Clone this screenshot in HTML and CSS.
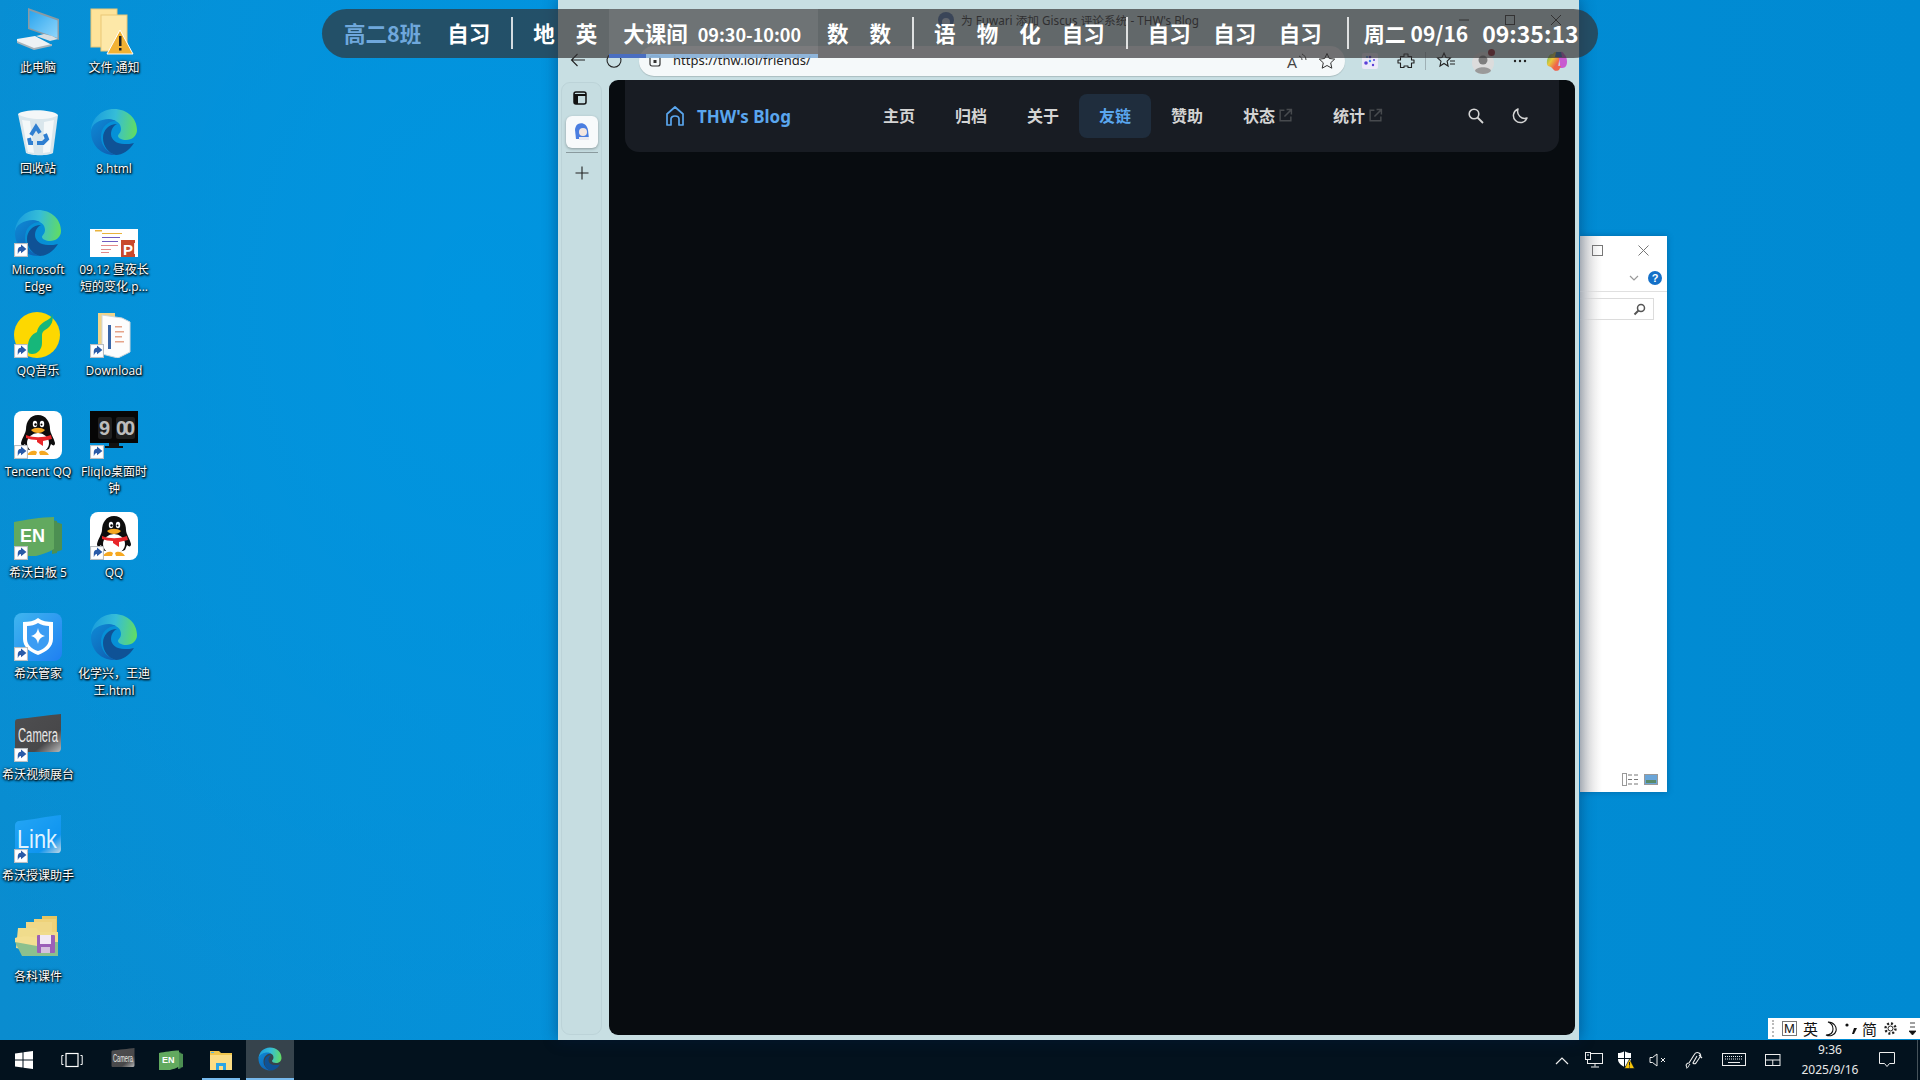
FILE: index.html
```html
<!DOCTYPE html>
<html lang="zh-CN">
<head>
<meta charset="utf-8">
<title>Desktop</title>
<link rel="stylesheet" href="styles.css">
</head>
<body>
<svg class="defs" width="0" height="0" aria-hidden="true">
  <defs>
    <linearGradient id="edgeTop" x1="0" y1="0.5" x2="1" y2="0.6"><stop offset="0" stop-color="#1a9ddd"/><stop offset=".5" stop-color="#35bdd8"/><stop offset="1" stop-color="#62dc62"/></linearGradient>
    <linearGradient id="edgeBody" x1="0" y1="0" x2="0.7" y2="1"><stop offset="0" stop-color="#0e8ad6"/><stop offset="1" stop-color="#0f62b4"/></linearGradient>
    <linearGradient id="monGrad" x1="0" y1="0" x2="1" y2="1"><stop offset="0" stop-color="#2aa4ee"/><stop offset="1" stop-color="#8fd6fb"/></linearGradient>
    <linearGradient id="guardGrad" x1="0" y1="0" x2="1" y2="1"><stop offset="0" stop-color="#3fb6ef"/><stop offset="1" stop-color="#1f7ff2"/></linearGradient>
    <linearGradient id="camGrad" x1="0" y1="0" x2="1" y2="1"><stop offset="0" stop-color="#4e4e50"/><stop offset=".7" stop-color="#48484a"/><stop offset="1" stop-color="#b9b9b9"/></linearGradient>
    <linearGradient id="linkGrad" x1="0" y1="0" x2="1" y2="1"><stop offset="0" stop-color="#25a6f5"/><stop offset=".75" stop-color="#0f95f0"/><stop offset="1" stop-color="#c8d8e2"/></linearGradient>
    <linearGradient id="copGrad" x1="0" y1="0" x2="1" y2="1"><stop offset="0" stop-color="#38b36f"/><stop offset=".4" stop-color="#e8c93a"/><stop offset=".7" stop-color="#f0654a"/><stop offset="1" stop-color="#b455d8"/></linearGradient>

    <symbol id="i-edge" viewBox="0 0 48 48">
      <path d="M1 24C1 11 11 1 24 1c13 0 23 9 23 21 0 6-5 10-11 10-4 0-8-2-8-4 0-2 3-3 3-7 0-6-5-9-11-9C10 12 1 18 1 24z" fill="url(#edgeTop)"/>
      <path d="M1 24c0-8 9-13 18-13 3 0 5 1 7 2-8 0-15 6-15 16 0 9 7 16 15 18h-2C11 47 1 37 1 24z" fill="url(#edgeBody)"/>
      <path d="M44 35C39 43 32 47 26 47c-8-2-13-9-13-17 0-8 6-14 14-14-4 2-6 6-6 10 0 6 6 10 13 10 4 0 7 0 10-1z" fill="#0f5296"/>
    </symbol>
    <symbol id="i-pc" viewBox="0 0 48 48">
      <path d="M14 1l31 11v21L14 22z" fill="#8b9aa3"/><path d="M15.500 3.500l28 10v17.500l-28-10z" fill="url(#monGrad)"/>
      <path d="M22 29l14 5 8-2-6-3-8-2z" fill="#d8dfe3"/><path d="M3 32l18-3 17 9-18 4-17-7z" fill="#eef2f4"/><path d="M3 34l17 7 18-4v2l-18 4-17-7z" fill="#a9b4ba"/>
    </symbol>
    <symbol id="i-warnfolder" viewBox="0 0 48 48">
      <rect x="1" y="2" width="26" height="38" fill="#fde39a" stroke="#eac777"/><rect x="11" y="8" width="26" height="36" fill="#fde8a8" stroke="#eac777"/>
      <path d="M30 23l13 24H17z" fill="#f2b233" stroke="#fff" stroke-width="1"/><rect x="29" y="29" width="2.500" height="10" fill="#222"/><rect x="29" y="41" width="2.500" height="2.500" fill="#222"/>
    </symbol>
    <symbol id="i-bin" viewBox="0 0 48 48">
      <path d="M4 6l40 1-5 38c-4 3-22 3-27 0z" fill="#d9e6ec"/><path d="M4 6c6-5 34-5 40 1-8 6-32 5-40-1z" fill="#f4f7f8"/><path d="M8 12l6 32 6 1-4-32zM30 14l-1 31 7-1 4-32z" fill="#fff" opacity=".7"/>
      <g fill="none" stroke="#2f7fd1" stroke-width="4"><path d="M17 27l5-8 4 6"/><path d="M31 26l2 5-4 4h-6"/><path d="M19 35h-3l-1-5"/></g>
    </symbol>
    <symbol id="i-ppt" viewBox="0 0 48 48">
      <rect x="0" y="20" width="48" height="28" fill="#fff"/>
      <g fill="#e9b33c"><rect x="5" y="21" width="7" height="1.500"/><rect x="12" y="24" width="20" height="1"/></g>
      <g fill="#6f5cc0"><rect x="12" y="28" width="18" height="1"/><rect x="12" y="32" width="16" height="1"/></g>
      <g fill="#e28a8a"><rect x="11" y="36" width="17" height="1"/><rect x="11" y="40" width="10" height="1"/><rect x="11" y="43" width="8" height="1"/></g>
      <rect x="31" y="31" width="14" height="17" fill="#c8492c"/><text x="33" y="46" class="svg-t" font-size="15" fill="#fff">P</text><rect x="44" y="34" width="4" height="11" fill="#fff" opacity=".85"/>
    </symbol>
    <symbol id="i-qqmusic" viewBox="0 0 48 48">
      <circle cx="23" cy="25" r="23" fill="#fdd800"/>
      <path d="M23 22c1-7 7-10 12-13 2-1 3-3 3-6 2 7 0 13-7 17-2 1-3 3-3 5v8c0 6-4 11-10 11-5 0-4-3-4-8 0-7 4-12 9-14z" fill="#16b77a"/>
    </symbol>
    <symbol id="i-download" viewBox="0 0 48 48">
      <path d="M8 3h17v42l-17-2z" fill="#f0d48a"/><path d="M12 5l20 3 8 4v30l-12 6-16-4z" fill="#fdfdfd" stroke="#cfd6da"/>
      <g fill="#3966a8"><rect x="18" y="15" width="3" height="24"/></g><g fill="#e6a48a"><rect x="25" y="16" width="7" height="1.500"/><rect x="25" y="21" width="9" height="1.500"/><rect x="25" y="26" width="7" height="1.500"/><rect x="25" y="31" width="9" height="1.500"/></g>
    </symbol>
    <symbol id="i-qq" viewBox="0 0 48 48">
      <rect x="0" y="0" width="48" height="48" rx="8" fill="#fff"/>
      <path d="M24 4c8 0 12 7 12 14 0 4 4 9 5 14 0 3-2 3-4 1l-2 5c-3 2-19 2-22 0l-2-5c-2 2-4 2-4-1 1-5 5-10 5-14C12 11 16 4 24 4z" fill="#0d0d0d"/>
      <ellipse cx="24" cy="32" rx="11" ry="10" fill="#fff"/>
      <ellipse cx="21" cy="13" rx="2.200" ry="3.200" fill="#fff"/><ellipse cx="28" cy="13" rx="2.200" ry="3.200" fill="#fff"/><circle cx="21.500" cy="13.500" r="1.200" fill="#000"/><circle cx="27.500" cy="13.500" r="1" fill="#000"/>
      <path d="M17 19c4-3 10-3 14 0-3 4-11 4-14 0z" fill="#f6a821"/>
      <path d="M12 24c8 3 16 3 25 0l1 4-9 2v5l-6-4v-2c-4 0-8-1-11-2z" fill="#e8262a"/>
      <path d="M13 44c3-5 8-5 10-3l-1 3zM35 44c-3-5-8-5-10-3l1 3z" fill="#f6a821"/>
    </symbol>
    <symbol id="i-fliqlo" viewBox="0 0 48 48">
      <rect x="0" y="0" width="48" height="32" fill="#060606"/>
      <rect x="8" y="6" width="14" height="22" rx="2" fill="#1f1f1f"/><rect x="26" y="6" width="19" height="22" rx="2" fill="#1f1f1f"/>
      <text x="9" y="24" class="svg-t" font-size="20" fill="#bcbcbc">9</text><text x="26" y="24" class="svg-t" font-size="20" fill="#bcbcbc" textLength="19">00</text>
      <rect x="19" y="32" width="10" height="3" fill="#111"/><rect x="15" y="35" width="18" height="2" fill="#111"/>
    </symbol>
    <symbol id="i-en" viewBox="0 0 48 48">
      <path d="M42 10l6 2v26l-6 2zM38 8l5 1v32l-5 1z" fill="#4c8f52"/>
      <path d="M0 10c10-2 28-5 40-5v32c-6 4-12 5-18 7H0z" fill="#62a95f"/>
      <text x="6" y="30" class="svg-t" font-size="18" fill="#fff">EN</text>
    </symbol>
    <symbol id="i-guard" viewBox="0 0 48 48">
      <rect width="48" height="48" rx="8" fill="url(#guardGrad)"/>
      <path d="M24 5c4 3 9 4 15 4v17c0 8-7 13-15 16-8-3-15-8-15-16V9c6 0 11-1 15-4z" fill="#fff"/>
      <path d="M24 10c3 2 7 3 11 3v13c0 6-5 10-11 12-6-2-11-6-11-12V13c4 0 8-1 11-3z" fill="#3b9cf3"/>
      <path d="M24 15c1 5 3 7 7 8-4 1-6 3-7 8-1-5-3-7-7-8 4-1 6-3 7-8z" fill="#fff"/>
    </symbol>
    <symbol id="i-camera" viewBox="0 0 48 48">
      <path d="M4 5C14 4 36 1 47 0v34c0 2-1 4-3 4H4c-2 0-3-1-3-3V8c0-2 1-3 3-3z" fill="url(#camGrad)"/>
      <text x="4" y="28" class="svg-t2" font-size="20" fill="#e8e8e8" textLength="40" lengthAdjust="spacingAndGlyphs">Camera</text>
    </symbol>
    <symbol id="i-link" viewBox="0 0 48 48">
      <path d="M5 6C16 5 36 1 47 0v34c0 2-1 4-3 4H4c-2 0-3-1-3-3V10c0-2 2-4 4-4z" fill="url(#linkGrad)"/>
      <text x="3" y="33" class="svg-t2" font-size="25" fill="#dff3ff" textLength="40" lengthAdjust="spacingAndGlyphs">Link</text>
    </symbol>
    <symbol id="i-course" viewBox="0 0 48 48">
      <path d="M28 0h15v34H28z" fill="#e6c661"/><path d="M20 3h22v30H20z" fill="#eed27a"/><path d="M12 6h26v30H12z" fill="#f0d888"/>
      <path d="M4 12h18l4 4h18v24L2 32z" fill="#f0dc8c"/><path d="M1 26h43v14H8z" fill="#8cc08e"/><path d="M1 22c5-2 18-2 22 0v8L1 26z" fill="#f3df92"/>
      <rect x="23" y="19" width="18" height="18" rx="1" fill="#9b60b8"/><rect x="26" y="19" width="11" height="9" fill="#f1e9f5"/><rect x="27" y="31" width="9" height="6" fill="#d5c1de"/>
    </symbol>
    <symbol id="i-shortcut" viewBox="0 0 13 13">
      <rect x=".5" y=".5" width="12" height="12" fill="#fff" stroke="#b9bec2"/>
      <path d="M3.500 10.500V7c0-2 1-3.500 3-3.500V1.500l5 4-5 4V7.500c-1.500 0-2 1-3 3z" fill="#2a5ba8"/>
    </symbol>
    <symbol id="i-ext" viewBox="0 0 14 14"><g fill="none" stroke="#474a4e" stroke-width="1.400"><path d="M6 2H2v10h10V8"/><path d="M8 1.500h4.500V6M12.500 1.500L6 8"/></g></symbol>
  </defs>
</svg>

<div class="screen">
  <main class="desktop">
    <div class="icon-grid">
      <div class="item"><div class="icon"><svg class="ico"><use href="#i-pc"/></svg></div><span class="label">此电脑</span></div>
      <div class="item"><div class="icon"><svg class="ico"><use href="#i-warnfolder"/></svg></div><span class="label">文件,通知</span></div>
      <div class="item"><div class="icon"><svg class="ico"><use href="#i-bin"/></svg></div><span class="label">回收站</span></div>
      <div class="item"><div class="icon"><svg class="ico"><use href="#i-edge"/></svg></div><span class="label">8.html</span></div>
      <div class="item"><div class="icon"><svg class="ico"><use href="#i-edge"/></svg><svg class="badge"><use href="#i-shortcut"/></svg></div><span class="label">Microsoft<br>Edge</span></div>
      <div class="item"><div class="icon"><svg class="ico"><use href="#i-ppt"/></svg></div><span class="label">09.12 昼夜长<br>短的变化.p...</span></div>
      <div class="item"><div class="icon"><svg class="ico"><use href="#i-qqmusic"/></svg><svg class="badge"><use href="#i-shortcut"/></svg></div><span class="label">QQ音乐</span></div>
      <div class="item"><div class="icon"><svg class="ico"><use href="#i-download"/></svg><svg class="badge"><use href="#i-shortcut"/></svg></div><span class="label">Download</span></div>
      <div class="item"><div class="icon"><svg class="ico"><use href="#i-qq"/></svg><svg class="badge"><use href="#i-shortcut"/></svg></div><span class="label">Tencent QQ</span></div>
      <div class="item"><div class="icon"><svg class="ico"><use href="#i-fliqlo"/></svg><svg class="badge"><use href="#i-shortcut"/></svg></div><span class="label">Fliqlo桌面时<br>钟</span></div>
      <div class="item"><div class="icon"><svg class="ico"><use href="#i-en"/></svg><svg class="badge"><use href="#i-shortcut"/></svg></div><span class="label">希沃白板 5</span></div>
      <div class="item"><div class="icon"><svg class="ico"><use href="#i-qq"/></svg><svg class="badge"><use href="#i-shortcut"/></svg></div><span class="label">QQ</span></div>
      <div class="item"><div class="icon"><svg class="ico"><use href="#i-guard"/></svg><svg class="badge"><use href="#i-shortcut"/></svg></div><span class="label">希沃管家</span></div>
      <div class="item"><div class="icon"><svg class="ico"><use href="#i-edge"/></svg></div><span class="label">化学兴，王迪<br>王.html</span></div>
      <div class="item"><div class="icon"><svg class="ico"><use href="#i-camera"/></svg><svg class="badge"><use href="#i-shortcut"/></svg></div><span class="label">希沃视频展台</span></div>
      <div class="item"></div>
      <div class="item"><div class="icon"><svg class="ico"><use href="#i-link"/></svg><svg class="badge"><use href="#i-shortcut"/></svg></div><span class="label">希沃授课助手</span></div>
      <div class="item"></div>
      <div class="item"><div class="icon"><svg class="ico"><use href="#i-course"/></svg></div><span class="label">各科课件</span></div>
    </div>

    <section class="back-window">
      <div class="bw-title">
        <svg width="11" height="11" viewBox="0 0 11 11"><rect x=".5" y=".5" width="10" height="10" fill="none" stroke="#777"/></svg>
        <svg width="11" height="11" viewBox="0 0 11 11"><path d="M.5.500l10 10M10.500.500l-10 10" stroke="#777"/></svg>
      </div>
      <div class="bw-ribbon">
        <svg width="10" height="6" viewBox="0 0 10 6"><path d="M1 1l4 4 4-4" fill="none" stroke="#999" stroke-width="1.200"/></svg>
        <span class="bw-help">?</span>
      </div>
      <div class="bw-search">
        <svg width="13" height="13" viewBox="0 0 13 13"><circle cx="8" cy="5" r="3.500" fill="none" stroke="#555" stroke-width="1.500"/><path d="M5.500 7.500L1.500 11.500" stroke="#555" stroke-width="2"/></svg>
      </div>
      <div class="bw-body"></div>
      <div class="bw-status">
        <svg width="17" height="13" viewBox="0 0 17 13"><rect x=".5" y=".5" width="4" height="12" fill="#fff" stroke="#999"/><path d="M6 2h4M12 2h4M6 6.500h4M12 6.500h4M6 11h4M12 11h4" stroke="#777" stroke-width="1.200"/></svg>
        <svg width="14" height="11" viewBox="0 0 14 11"><rect x=".5" y=".5" width="13" height="10" fill="#6aa5d8" stroke="#999"/><rect x="2" y="6" width="10" height="3" fill="#5a8a6a"/></svg>
      </div>
    </section>

    <section class="edge">
      <header class="titlebar">
        <svg class="favicon" width="16" height="16" viewBox="0 0 16 16"><circle cx="8" cy="8" r="8" fill="#4a6fa8"/><circle cx="8" cy="10" r="4" fill="#c5d6ea"/></svg>
        <span class="tab-title">为 Fuwari 添加 Giscus 评论系统 - THW's Blog</span>
        <div class="win-ctrls">
          <span class="ctrl"><svg width="10" height="10" viewBox="0 0 10 10"><path d="M0 5h10" stroke="#333"/></svg></span>
          <span class="ctrl"><svg width="10" height="10" viewBox="0 0 10 10"><rect x=".5" y=".5" width="9" height="9" fill="none" stroke="#333"/></svg></span>
          <span class="ctrl"><svg width="10" height="10" viewBox="0 0 10 10"><path d="M0 0l10 10M10 0L0 10" stroke="#333"/></svg></span>
        </div>
      </header>
      <div class="toolbar">
        <svg class="tb-back" width="16" height="16" viewBox="0 0 16 16"><path d="M15 8H1.500M7.500 2L1.500 8l6 6" fill="none" stroke="#222" stroke-width="1.100"/></svg>
        <svg class="tb-reload" width="16" height="16" viewBox="0 0 16 16"><path d="M12 2.500A7 7 0 1 1 4 2.500" fill="none" stroke="#222" stroke-width="1.100"/></svg>
        <div class="address">
          <svg width="12" height="12" viewBox="0 0 12 12"><rect x="1" y="1" width="10" height="10" rx="2" fill="none" stroke="#333" stroke-width="1.200"/><rect x="4.500" y="5" width="3" height="3" fill="#333"/></svg>
          <span class="url">https://thw.lol/friends/</span>
          <svg class="addr-read" width="22" height="18" viewBox="0 0 22 18"><text x="1" y="16" class="svg-t2" font-size="15" fill="#444">A</text><path d="M13 4c2 1 3 2 3 4M16 2c2 1 4 3 4 6" fill="none" stroke="#444"/></svg>
          <svg class="addr-star" width="18" height="18" viewBox="0 0 18 18"><path d="M9 1.500l2.300 5 5.400.6-4 3.700 1.100 5.400L9 13.500l-4.800 2.700 1.100-5.400-4-3.700 5.400-.6z" fill="none" stroke="#333"/></svg>
        </div>
        <div class="tb-icons">
          <svg width="18" height="18" viewBox="0 0 18 18"><rect width="16" height="16" x="1" y="1" rx="2" fill="#eceaf8"/><g fill="#5a3fd8"><circle cx="5" cy="11" r="1.800"/><circle cx="9" cy="5" r="1.300"/><circle cx="13" cy="8" r="1"/><circle cx="12" cy="13" r="1.200"/></g><g fill="#3a8ff0"><circle cx="6" cy="5" r="1"/><circle cx="9" cy="9" r="1.200"/></g></svg>
          <svg class="tb-ext" width="18" height="18" viewBox="0 0 18 18"><path d="M7 2h4v2.500h3.500V8H17v3h-2.500v4.500H11V14H7v1.500H3.500V11H1V8h2.500V4.500H7z" fill="none" stroke="#222" stroke-width="1.100" stroke-linejoin="round"/></svg>
          <span class="tb-sep"></span>
          <svg width="20" height="20" viewBox="0 0 20 20"><path d="M8 2l2 4.500 4.500.5-3.400 3.200 1 4.800L8 12.500 4 15l1-4.800L1.500 7l4.500-.5z" fill="none" stroke="#222" stroke-width="1.100"/><path d="M14 10h5M14 13h5" stroke="#222"/></svg>
          <div class="avatar"><svg width="22" height="22" viewBox="0 0 22 22"><circle cx="11" cy="11" r="11" fill="#dcdcdc"/><circle cx="11" cy="8" r="4.500" fill="#7e7e7e"/><path d="M3 19c1-5 15-5 16 0-3 4-13 4-16 0z" fill="#9a9a9a"/></svg><span class="dot"></span></div>
          <svg width="20" height="20" viewBox="0 0 20 20"><g fill="#222"><circle cx="5" cy="10" r="1.200"/><circle cx="10" cy="10" r="1.200"/><circle cx="15" cy="10" r="1.200"/></g></svg>
          <svg width="22" height="22" viewBox="0 0 22 22"><path d="M7 4c1-3 6-3 7 0l-2 14c-1 3-4 3-5 1L5 17 2 16C0 14 1 8 3 6c1-2 3-2 4-2z" fill="url(#copGrad)"/><path d="M12 4c1-3 5-3 6 0 3 2 4 9 2 12-1 2-4 2-5 2h-4c2 0 3-2 3-4z" fill="#c85ad0"/><path d="M10 2h5l1 5H9z" fill="#2a6fb8"/><path d="M8 16l7 0-2 4c-1 1-4 1-5 0z" fill="#f0654a"/></svg>
        </div>
      </div>
      <div class="edge-body">
        <aside class="side">
          <svg class="side-ico" width="14" height="14" viewBox="0 0 14 14"><rect x="1" y="1" width="12" height="12" rx="2" fill="none" stroke="#111" stroke-width="1.500"/><path d="M1 4h12" stroke="#111" stroke-width="2"/><rect x="1" y="4" width="4" height="9" fill="#111"/></svg>
          <div class="side-tab"><svg width="16" height="18" viewBox="0 0 16 18"><path d="M4 1c5-2 9 1 10 6l1 9H2L1 7c0-2 1-5 3-6z" fill="#4a7ee0"/><circle cx="9" cy="9" r="4" fill="#f3e6e0"/><rect x="5" y="14" width="10" height="3" fill="#e8e8f0"/></svg></div>
          <span class="side-div"></span>
          <svg class="side-plus" width="16" height="16" viewBox="0 0 16 16"><path d="M8 1.500v13M1.500 8h13" stroke="#222" stroke-width="1.100"/></svg>
        </aside>
        <div class="page">
          <nav class="nav">
            <a class="brand">
              <svg width="22" height="22" viewBox="0 0 22 22"><path d="M3 20V9l8-7 8 7v11h-4v-6c0-4-8-4-8 0v6z" fill="none" stroke="#5aa6ee" stroke-width="1.700" stroke-linejoin="round"/></svg>
              <span>THW's Blog</span>
            </a>
            <a class="link">主页</a>
            <a class="link">归档</a>
            <a class="link">关于</a>
            <a class="link active">友链</a>
            <a class="link">赞助</a>
            <a class="link">状态<svg class="ext"><use href="#i-ext"/></svg></a>
            <a class="link">统计<svg class="ext"><use href="#i-ext"/></svg></a>
            <a class="nav-btn first"><svg width="18" height="18" viewBox="0 0 18 18"><circle cx="7" cy="7" r="4.800" fill="none" stroke="#d5d5d5" stroke-width="1.600"/><path d="M10.500 10.500L16 16" stroke="#d5d5d5" stroke-width="1.800"/></svg></a>
            <a class="nav-btn"><svg width="18" height="18" viewBox="0 0 18 18"><path d="M7 2a7 7 0 1 0 9 9c-5 2-11-3-9-9z" fill="none" stroke="#d5d5d5" stroke-width="1.500" stroke-linejoin="round"/></svg></a>
          </nav>
        </div>
      </div>
    </section>

    <div class="schedule">
      <span class="cls">高二8班</span>
      <span>自习</span><i class="bar"></i>
      <span>地</span><span>英</span>
      <span class="now"><b>大课间</b><small>09:30-10:00</small><em class="prog"><u></u></em></span>
      <span>数</span><span>数</span><i class="bar"></i>
      <span>语</span><span>物</span><span>化</span><span>自习</span><i class="bar"></i>
      <span>自习</span><span class="wide">自习</span><span class="wide">自习</span><i class="bar last"></i>
      <span class="date">周二 09/16</span><span class="clock">09:35:13</span>
    </div>

    <div class="ime">
      <span class="ime-grip"></span>
      <span class="ime-m">M</span>
      <span class="ime-c">英</span>
      <svg width="14" height="16" viewBox="0 0 14 16"><path d="M4 1c6 0 9 5 8 9s-6 6-10 4c4 0 7-2 7-6 0-3-2-6-5-7z" fill="none" stroke="#111" stroke-width="1.100"/></svg>
      <svg width="14" height="14" viewBox="0 0 14 14"><circle cx="3" cy="3" r="1.600" fill="#111"/><path d="M10 6h3l-3 6H8z" fill="#111"/></svg>
      <span class="ime-c ime-jian">简</span>
      <svg width="15" height="15" viewBox="0 0 15 15"><circle cx="7.500" cy="7.500" r="2.500" fill="none" stroke="#222"/><circle cx="7.500" cy="7.500" r="5" fill="none" stroke="#222" stroke-width="2.400" stroke-dasharray="2 1.900"/></svg>
      <svg class="ime-more" width="7" height="13" viewBox="0 0 7 13"><path d="M1 1h5M1 5h5M0 9h7l-3.500 4z" fill="#111" stroke="#111" stroke-width=".8"/></svg>
    </div>
  </main>

  <footer class="taskbar">
    <button class="tk"><svg width="18" height="18" viewBox="0 0 18 18"><path d="M0 2.500l7.500-1v7H0zM8.500 1.300L18 0v8.500H8.500zM0 9.500h7.500v7l-7.500-1zM8.500 9.500H18V18l-9.500-1.300z" fill="#fff"/></svg></button>
    <button class="tk"><svg width="22" height="16" viewBox="0 0 22 16"><rect x="5" y="1.500" width="12" height="13" fill="none" stroke="#fff" stroke-width="1.200"/><path d="M2.500 3.500H.800v9h1.700M19.500 3.500h1.700v9h-1.700" fill="none" stroke="#fff"/></svg></button>
    <button class="tk tk-cam"><svg class="tk-ico"><use href="#i-camera"/></svg></button>
    <button class="tk"><svg class="tk-ico"><use href="#i-en"/></svg></button>
    <button class="tk open"><svg width="24" height="24" viewBox="0 0 24 24"><path d="M1 3h9l2 2h11v3H1z" fill="#f0c64e"/><path d="M1 7h22v15H1z" fill="#fbdd85"/><path d="M7 22v-7h10v7h-3v-4h-4v4z" fill="#2ba5e6"/><path d="M2 4h3v1H2z" fill="#4fb3e8"/></svg></button>
    <button class="tk open active"><svg class="tk-ico"><use href="#i-edge"/></svg></button>

    <div class="tray">
      <span class="tr w32"><svg width="14" height="9" viewBox="0 0 14 9"><path d="M1 8l6-6 6 6" fill="none" stroke="#eee" stroke-width="1.200"/></svg></span>
      <span class="tr w32"><svg width="18" height="16" viewBox="0 0 18 16"><rect x="2.500" y="1.500" width="15" height="10" fill="none" stroke="#eee"/><rect x=".5" y=".5" width="5" height="7" fill="#03121e" stroke="#eee"/><path d="M10 11.500v3M6 15h8" stroke="#eee"/><path d="M2 3h2" stroke="#eee"/></svg></span>
      <span class="tr w32"><svg width="18" height="18" viewBox="0 0 18 18"><path d="M7.500 0c2 1.500 4 2 6.500 2v6c0 4-3 6-6.500 8C4 14 1 12 1 8V2c2.500 0 4.500-.5 6.500-2z" fill="#fff"/><path d="M7.500 0v16M1 7.500h13" stroke="#03121e"/><path d="M12.500 8l5 9.500h-10z" fill="#f7c40a" stroke="#03121e" stroke-width=".6"/><path d="M12.500 11v3.500M12.500 15.500v1" stroke="#222"/></svg></span>
      <span class="tr w32"><svg width="18" height="14" viewBox="0 0 18 14"><path d="M1 4.500h2.500L8 1v12L3.500 9.500H1z" fill="none" stroke="#eee"/><path d="M12 5l4 4M16 5l-4 4" stroke="#eee"/></svg></span>
      <span class="tr w40"><svg width="18" height="18" viewBox="0 0 18 18"><path d="M2 16c-2-2 0-4 2-4l5-8c1-2 3-3 5-2s2 3 1 4l-4 6c-1 1-2 1-3 0l4-7M14 4l3 3" fill="none" stroke="#eee" stroke-width="1.100"/><path d="M1 17c3 0 2-2 4-4" fill="none" stroke="#eee"/></svg></span>
      <span class="tr w39"><svg width="24" height="14" viewBox="0 0 24 14"><rect x=".5" y=".5" width="23" height="12" fill="none" stroke="#eee"/><path d="M3 3.500h18M3 6h18" stroke="#eee" stroke-dasharray="1 1"/><path d="M6 9.500h12" stroke="#eee"/></svg></span>
      <span class="tr w40"><svg width="16" height="13" viewBox="0 0 16 13"><rect x=".5" y=".5" width="14.500" height="11" fill="none" stroke="#eee"/><path d="M.5 6h14.500M7.750 6v5.500" stroke="#eee"/></svg></span>
      <span class="tr-clock"><span>9:36</span><span>2025/9/16</span></span>
      <span class="tr w40"><svg width="16" height="16" viewBox="0 0 16 16"><path d="M.5.500h15v11h-5L8 14.500 5.500 11.500h-5z" fill="none" stroke="#eee"/></svg></span>
      <span class="tr-show"></span>
    </div>
  </footer>
</div>
</body>
</html>
```
FILE: styles.css
```css
* { box-sizing: border-box; }
html, body { margin: 0; padding: 0; height: 100%; overflow: hidden; }
body { font-family: "Noto Sans", "Noto Sans CJK SC", sans-serif; }
.defs { position: absolute; }
.svg-t { font-family: "Liberation Sans", sans-serif; font-weight: 700; }
.svg-t2 { font-family: "Liberation Sans", sans-serif; }

.screen { width: 1920px; height: 1080px; display: flex; flex-direction: column; overflow: hidden; }
.desktop {
  position: relative; height: 1040px; flex: none;
  background: radial-gradient(ellipse 700px 900px at 480px 300px, #0095e0 0%, rgba(0,148,222,0) 100%), linear-gradient(90deg, #0a8ccf 0%, #0590d8 30%, #008ad2 100%);
}

/* desktop icons */
.icon-grid { display: grid; grid-template-columns: 76px 76px; grid-auto-rows: 101px; padding-top: 7px; width: 152px; }
.item { display: flex; flex-direction: column; align-items: center; }
.icon { position: relative; width: 48px; height: 48px; flex: none; }
.ico { width: 48px; height: 48px; display: block; }
.badge { position: absolute; left: 0; bottom: 0; width: 14px; height: 14px; }
.label {
  margin-top: 4px;
  font-family: "Open Sans", "Noto Sans CJK SC", sans-serif;
  font-size: 12px; line-height: 17px; color: #fff; text-align: center; white-space: nowrap;
  text-shadow: 0 1px 2px #000, 1px 1px 2px #000, 0 0 3px rgba(0,0,0,.8);
}

/* window behind */
.back-window {
  position: absolute; left: 1580px; top: 236px; width: 87px; height: 556px;
  display: flex; flex-direction: column;
  background: linear-gradient(90deg, #d6d6d6 0, #fff 22px);
  box-shadow: 0 0 6px rgba(0,40,90,.35);
}
.bw-title { height: 28px; display: flex; align-items: center; gap: 35px; padding: 0 0 0 12px; }
.bw-ribbon { height: 28px; display: flex; align-items: center; justify-content: flex-end; gap: 9px; padding-right: 5px; border-bottom: 1px solid #e0e0e0; }
.bw-help { width: 14px; height: 14px; border-radius: 50%; background: #1470c8; color: #fff; font: 700 11px/14px "Liberation Sans", sans-serif; text-align: center; }
.bw-search { height: 22px; margin: 6px 13px 0 0; display: flex; align-items: center; justify-content: flex-end; padding-right: 7px; border: 1px solid #dcdcdc; border-left: 0; }
.bw-body { flex: 1; }
.bw-status { height: 26px; display: flex; align-items: center; justify-content: flex-end; gap: 5px; padding-right: 9px; }

/* browser window */
.edge {
  position: absolute; left: 558px; top: 0; width: 1022px; height: 1040px;
  display: flex; flex-direction: column;
  background: #c8dfe3;
  border-right: 1px solid #0d77bb;
  box-shadow: 0 0 14px rgba(0,30,70,.45);
}
.titlebar { height: 46px; flex: none; display: flex; align-items: flex-start; padding-left: 380px; }
.favicon { margin-top: 12px; flex: none; }
.tab-title { margin: 12px 0 0 7px; font-size: 11.7px; line-height: 16px; color: #2a2a2a; white-space: nowrap; }
.win-ctrls { margin-left: auto; display: flex; }
.ctrl { width: 46px; height: 40px; display: flex; align-items: center; justify-content: center; }
.toolbar { height: 34px; flex: none; display: flex; align-items: flex-start; padding-left: 12px; }
.tb-back, .tb-reload { flex: none; margin-top: 6px; }
.tb-reload { margin-left: 20px; }
.address {
  margin-left: 17px; width: 706px; height: 30px; flex: none;
  display: flex; align-items: center; padding: 0 9px 0 10px; gap: 12px;
  background: #f5f9fa; border-radius: 15px; box-shadow: 0 1px 1px rgba(0,0,0,.15);
}
.url { font-size: 13px; line-height: 16px; margin-top: -2px; color: #222; flex: 1; }
.addr-read { margin-right: -2px; }
.tb-icons { display: flex; align-items: center; gap: 16px; margin-left: 16px; height: 30px; }
.tb-icons > svg { flex: none; }
.tb-ext { margin-left: 2px; }
.tb-sep { width: 1px; height: 18px; background: #9fb0b5; margin: 0 -6px; }
.avatar { position: relative; width: 22px; height: 22px; margin-top: 3px; }
.dot { position: absolute; right: -1px; top: -3px; width: 7px; height: 7px; border-radius: 50%; background: #8c1f2a; }

.edge-body { flex: 1; display: flex; padding: 0 4px 5px 3px; min-height: 0; }
.side {
  width: 41px; flex: none; margin-top: 2px; margin-right: 7px; padding-top: 8px;
  display: flex; flex-direction: column; align-items: center;
  background: #c6dde1; border: 1px solid #bcd3d8; border-radius: 9px;
}
.side-ico { flex: none; margin-left: -3px; }
.side-tab { width: 32px; height: 32px; margin-top: 11px; background: #f7fafb; border-radius: 6px; box-shadow: 0 1px 3px rgba(0,0,0,.3); display: flex; align-items: center; justify-content: center; }
.side-div { width: 32px; height: 1px; background: #8a9a9e; margin-top: 4px; }
.side-plus { margin-top: 12px; }
.page { flex: 1; background: #080c10; border-radius: 9px; overflow: hidden; }

.nav {
  margin-left: 16px; width: 934px; height: 72px;
  display: flex; align-items: center; padding: 0 17px 0 39px;
  background: #181c23; border-radius: 0 0 14px 14px;
}
.brand { display: flex; align-items: center; gap: 11px; margin-right: 72px; color: #5aa6ee; font: 700 17px "Noto Sans", sans-serif; white-space: nowrap; }
.link {
  height: 44px; padding: 0 20px 2px; display: flex; align-items: center; gap: 3px; border-radius: 8px;
  font-family: "Noto Sans CJK SC", sans-serif; font-size: 16px; font-weight: 700; color: #d4d4d4; white-space: nowrap;
}
.link.active { background: #1f2d3d; color: #5aa6ee; }
.ext { width: 15px; height: 15px; flex: none; }
.nav-btn { width: 44px; height: 44px; display: flex; align-items: center; justify-content: center; }
.nav-btn.first { margin-left: auto; }

/* schedule overlay */
.schedule {
  position: absolute; left: 322px; top: 9px; width: 1276px; height: 49px;
  display: flex; align-items: center; gap: 21px; padding: 0 0 2px 22px;
  background: rgba(51,50,51,.685); border-radius: 25px;
  color: #fff; font: 700 21.5px "Noto Sans CJK SC", sans-serif; white-space: nowrap;
}
.cls { color: #6fa8dc; margin-right: 5px; }
.bar { width: 2px; height: 32px; background: rgba(255,255,255,.8); flex: none; margin-right: -1px; }
.bar.last { margin-left: 4px; margin-right: -6px; }
.wide { margin-left: 1.500px; }
.now {
  position: relative; align-self: stretch; display: flex; align-items: center; gap: 10px;
  margin: 0 -12px -2px -9px; padding: 0 17px 2px 14px; background: rgba(255,255,255,.08);
}
.now b { font-weight: 700; }
.now small { font-size: 18px; font-weight: 700; padding-top: 3px; }
.prog { position: absolute; left: 0; right: 0; bottom: 0; height: 4px; background: rgba(150,200,250,.75); }
.prog u { display: block; width: 37px; height: 100%; background: #4a6ec0; }
.date { margin-right: -7px; font-size: 21px; }
.clock { font-size: 23px; }

/* IME bar */
.ime {
  position: absolute; right: 0; bottom: 1px; width: 152px; height: 21px;
  display: flex; align-items: center; gap: 6px; padding-left: 4px; background: #fff;
}
.ime-grip { width: 2px; height: 17px; border-left: 2px dotted #bbb; margin-right: 2px; }
.ime-m { width: 15px; height: 15px; border: 1px solid #777; font: 13px/13px "Liberation Sans", sans-serif; text-align: center; color: #111; }
.ime-c { font-size: 15px; line-height: 20px; color: #111; }
.ime-jian { margin-left: -2px; }
.ime-more { margin-left: 5px; }

/* taskbar */
.taskbar { height: 40px; flex: none; display: flex; background: #03121e; }
.tk { width: 48px; height: 40px; padding: 0; border: 0; background: none; display: flex; align-items: center; justify-content: center; position: relative; flex: none; }
.tk-cam { margin-left: 3px; }
.tk.open { border-bottom: 2px solid #76b9ed; margin-left: 2px; }
.tk.open:not(.active) { border-bottom: 0; }
.tk.open:not(.active)::after { content: ""; position: absolute; left: 5px; right: 5px; bottom: 0; height: 2px; background: #76b9ed; }
.tk.active { background: #36434c; margin-left: 1px; }
.tk-ico { width: 24px; height: 24px; }
.tray { margin-left: auto; display: flex; align-items: center; height: 40px; }
.tr { display: flex; align-items: center; justify-content: center; height: 40px; flex: none; }
.w32 { width: 32px; } .w39 { width: 39px; } .w40 { width: 40px; }
.tr-clock { width: 74px; display: flex; flex-direction: column; align-items: center; font-size: 12px; line-height: 20px; color: #e8e8e8; white-space: nowrap; }
.tr-show { width: 3px; height: 40px; border-left: 1px solid #46525a; margin-left: 10px; }
```
